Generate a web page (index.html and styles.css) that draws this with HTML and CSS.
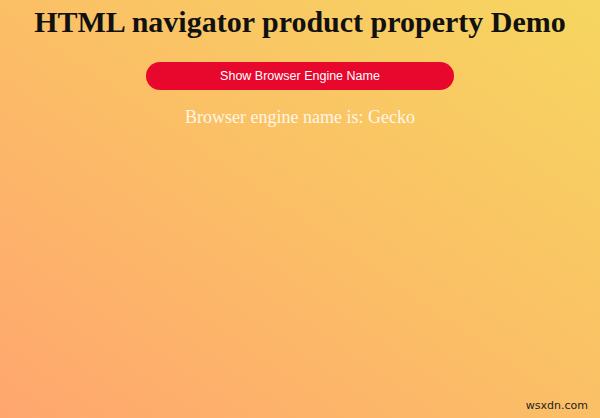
FILE: index.html
```html
<!DOCTYPE html>
<html>
<head>
<meta charset="utf-8">
<link rel="stylesheet" href="styles.css">
</head>
<body>
<main class="page">
  <h1 class="title">HTML navigator product property Demo</h1>
  <button class="btn">Show Browser Engine Name</button>
  <p class="result">Browser engine name is: Gecko</p>
</main>
<div class="watermark">wsxdn.com</div>
</body>
</html>
```
FILE: styles.css
```css
html, body {
  margin: 0;
  height: 100%;
}
body {
  background: linear-gradient(to top right, #ffa66f 0%, #fbbf66 50%, #f6d660 100%);
  font-family: "Liberation Serif", "Times New Roman", serif;
  position: relative;
  overflow: hidden;
}
.page {
  display: flex;
  flex-direction: column;
  align-items: center;
  padding-top: 5px;
}
.title {
  font-size: 30px;
  font-weight: bold;
  color: #111;
  margin: 0;
  line-height: 34px;
}
.btn {
  margin-top: 23px;
  width: 308px;
  height: 28px;
  border: none;
  border-radius: 14px;
  background: #e8072d;
  color: #fff;
  font-family: "Liberation Sans", Arial, sans-serif;
  font-size: 12.5px;
  cursor: pointer;
}
.result {
  margin: 16px 0 0;
  font-size: 18px;
  line-height: 22px;
  color: #fff6e6;
}
.watermark {
  position: absolute;
  right: 12px;
  bottom: 6px;
  font-family: "DejaVu Sans", sans-serif;
  font-size: 11px;
  color: #222;
}
```
